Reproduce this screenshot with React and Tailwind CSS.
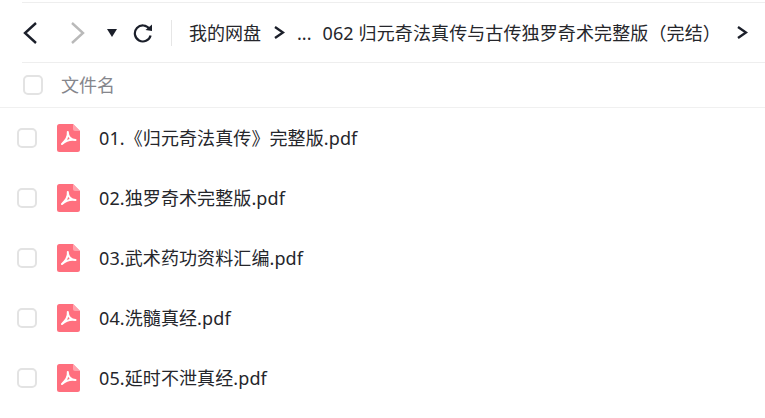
const files = [
  '01.《归元奇法真传》完整版.pdf',
  '02.独罗奇术完整版.pdf',
  '03.武术药功资料汇编.pdf',
  '04.洗髓真经.pdf',
  '05.延时不泄真经.pdf',
]

function PdfIcon() {
  return (
    <svg width="23" height="28" viewBox="0 0 23 28" className="shrink-0">
      <path d="M2.5 0H16L23 7V25.5a2.5 2.5 0 0 1-2.5 2.5H2.5A2.5 2.5 0 0 1 0 25.5V2.5A2.5 2.5 0 0 1 2.5 0Z" fill="#ff6f7e" />
      <path d="M16 0L23 7H18a2 2 0 0 1-2-2Z" fill="#ffa3ad" />
      <path
        d="M10.8 8C11.2 11.5 9.5 16 5 20M10.8 8C10.8 12.5 14 16 18.5 16C14.5 15.2 9.5 16 5 20"
        fill="none"
        stroke="#fff"
        strokeWidth="2"
        strokeLinecap="round"
        strokeLinejoin="round"
      />
    </svg>
  )
}

function Checkbox() {
  return <div className="h-5 w-5 shrink-0 rounded-[5px] border-2 border-[#e3e3e3] bg-white"></div>
}

function Chevron({ dir, color, w = 15, h = 24, sw = 2.4 }) {
  const d = dir === 'left' ? `M${w - 2} 2L2 ${h / 2}L${w - 2} ${h - 2}` : `M2 2L${w - 2} ${h / 2}L2 ${h - 2}`
  return (
    <svg width={w} height={h} viewBox={`0 0 ${w} ${h}`} className="shrink-0">
      <path d={d} fill="none" stroke={color} strokeWidth={sw} />
    </svg>
  )
}

export default function App() {
  return (
    <div
      className="h-[418px] w-[765px] overflow-hidden bg-white text-[#25262b]"
      style={{ fontFamily: '"Noto Sans", "Noto Sans CJK SC", sans-serif' }}
    >
      <div className="mt-[2px] ml-[22px] flex h-[61px] items-center border-t border-b border-[#eeeeee]">
        <div className="ml-[1px]">
          <Chevron dir="left" color="#1b1f2a" />
        </div>
        <div className="ml-[32px]">
          <Chevron dir="right" color="#b9b9b9" />
        </div>
        <svg width="10" height="8" viewBox="0 0 10 8" className="ml-[22px] shrink-0">
          <path d="M0 0H10L5 8Z" fill="#1b1f2a" />
        </svg>
        <svg width="20" height="20" viewBox="0 0 20 20" className="ml-[16px] shrink-0">
          <path d="M16.5 6A8 8 0 1 0 17.6 12.5" fill="none" stroke="#1b1f2a" strokeWidth="2.2" />
          <path d="M12.5 7L19 1.5V8Z" fill="#1b1f2a" />
        </svg>
        <div className="ml-[18px] h-[26px] w-px bg-[#e6e6e6]"></div>
        <span className="ml-[17px] text-[18px] leading-none whitespace-nowrap">我的网盘</span>
        <div className="ml-[12px]">
          <Chevron dir="right" color="#1b1f2a" w={12} h={15} sw={2.4} />
        </div>
        <span className="ml-[12px] text-[18px] leading-none">...</span>
        <span className="ml-[11px] text-[18px] leading-none tracking-[0.12px] whitespace-nowrap">062 归元奇法真传与古传独罗奇术完整版（完结）</span>
        <div className="ml-[15px]">
          <Chevron dir="right" color="#1b1f2a" w={12} h={15} sw={2.4} />
        </div>
      </div>

      <div className="flex h-[45px] items-center border-b border-[#f0f0f0] pl-[23px]">
        <Checkbox />
        <span className="ml-[18px] text-[18px] leading-none text-[#85868c]">文件名</span>
      </div>

      <div>
        {files.map((name) => (
          <div key={name} className="flex h-[60px] items-center pl-[17px]">
            <Checkbox />
            <div className="ml-[20px]">
              <PdfIcon />
            </div>
            <span className="ml-[19px] text-[18px] leading-none tracking-[0.1px] whitespace-nowrap">{name}</span>
          </div>
        ))}
      </div>
    </div>
  )
}
